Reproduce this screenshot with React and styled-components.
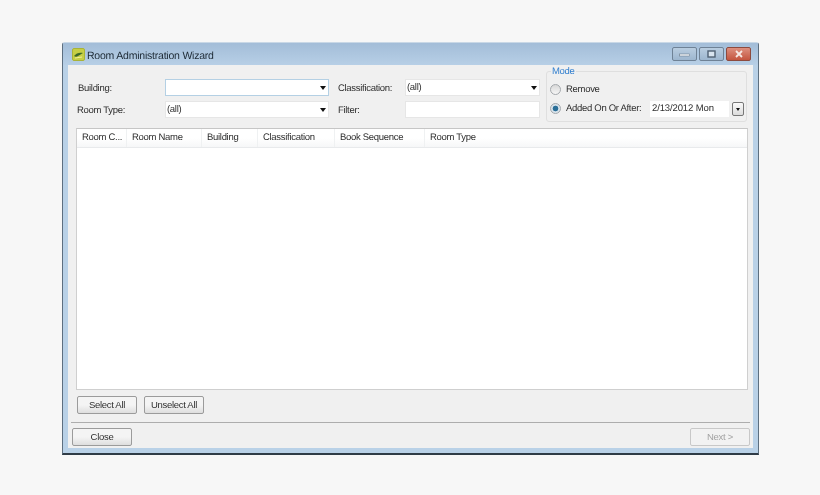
import React from 'react';
import styled, { createGlobalStyle } from 'styled-components';

const GlobalStyle = createGlobalStyle`
  html, body {
    margin: 0;
    background: #f7f7f7;
  }
  body {
    font-family: "Liberation Sans", Arial, sans-serif;
    font-size: 9.5px;
    letter-spacing: -0.3px;
    text-rendering: geometricPrecision;
    color: #2e2e2e;
    white-space: nowrap;
  }
`;

const Page = styled.div`
  width: 820px;
  height: 495px;
  padding: 42px 61px 40px 62px;
  box-sizing: border-box;
  filter: blur(0.4px);
`;

const Window = styled.div`
  height: 413px;
  box-sizing: border-box;
  display: flex;
  flex-direction: column;
  background: #b9d1e7;
  border: 1px solid #5d6f80;
  border-bottom: 2px solid #2f3b46;
  border-top-color: #c9d8e6;
  border-radius: 3px 3px 0 0;
`;

const TitleBar = styled.div`
  height: 22px;
  flex: none;
  display: flex;
  align-items: center;
  padding: 0 7px 0 9px;
  gap: 2px;
  background: linear-gradient(#a3bdd8, #b7cfe6);
`;

const Title = styled.div`
  flex: 1;
  font-size: 10.5px;
  letter-spacing: -0.22px;
  color: #1d2a35;
  padding-top: 3px;
`;

const WindowControls = styled.div`
  display: flex;
  gap: 2px;
  margin-top: -1px;
`;

const ControlButton = styled.div`
  width: 25px;
  height: 14px;
  box-sizing: border-box;
  display: flex;
  align-items: center;
  justify-content: center;
  border: 1px solid ${(p) => (p.$close ? '#8d4a3e' : '#6f8296')};
  border-radius: 2px;
  background: ${(p) =>
    p.$close ? 'linear-gradient(#dd8f7e, #c4553f)' : 'linear-gradient(#b9cde0, #9db6cf)'};
`;

const Client = styled.div`
  flex: 1;
  min-height: 0;
  margin: 0 5px 5px;
  background: #f0f0f0;
  display: flex;
  flex-direction: column;
`;

const Filters = styled.div`
  height: 63px;
  flex: none;
  display: flex;
  padding-left: 9px;
`;

const FilterGrid = styled.div`
  display: grid;
  grid-template-columns: 88px 164px 76px 135px;
  grid-auto-rows: 17px;
  row-gap: 5px;
  padding-top: 14px;
`;

const FieldLabel = styled.label`
  display: flex;
  align-items: center;
  padding-top: 1px;
  padding-left: ${(p) => (p.$side ? '9px' : p.$indent ? '1px' : '0')};
`;

const ComboBox = styled.div`
  position: relative;
  display: flex;
  align-items: center;
  box-sizing: border-box;
  padding: 0 0 1px 1px;
  background: #fff;
  border: 1px solid ${(p) => (p.$focus ? '#b4d0e4' : '#e6e6e6')};
`;

const ComboArrow = styled.span`
  position: absolute;
  right: 2px;
  top: 6px;
  border-left: 3px solid transparent;
  border-right: 3px solid transparent;
  border-top: 4px solid #111;
`;

const ModeGroup = styled.fieldset`
  width: 201px;
  height: 57px;
  box-sizing: border-box;
  margin: 0 0 0 6px;
  padding: 4px 0 0 3px;
  border: 1px solid #dfdfdf;
  border-radius: 3px;
  display: flex;
  flex-direction: column;
  gap: 2px;
`;

const ModeLegend = styled.legend`
  padding: 2px 1px 0;
  margin-left: 1px;
  color: #3480cf;
  line-height: 10px;
`;

const ModeRow = styled.div`
  display: flex;
  align-items: center;
  height: 17px;
`;

const Radio = styled.span`
  width: 9px;
  height: 9px;
  flex: none;
  margin-right: 5px;
  border-radius: 50%;
  border: 1px solid #a4a8ac;
  background: ${(p) =>
    p.$checked
      ? 'radial-gradient(circle, #2b6f98 0 2.5px, #d9e4ec 3.2px)'
      : 'linear-gradient(#d8d8d8, #f6f6f6)'};
`;

const ModeText = styled.span`
  width: 84px;
  flex: none;
`;

const DateBox = styled.div`
  width: 79px;
  height: 16px;
  padding-left: 2px;
  box-sizing: border-box;
  display: flex;
  align-items: center;
  background: #fff;
  letter-spacing: -0.12px;
`;

const DateButton = styled.div`
  width: 10px;
  height: 12px;
  margin-left: 3px;
  position: relative;
  border: 1px solid #777;
  border-radius: 2px;
  background: linear-gradient(#fafafa, #dcdcdc);
  &::after {
    content: '';
    position: absolute;
    left: 3px;
    top: 5px;
    border-left: 2px solid transparent;
    border-right: 2px solid transparent;
    border-top: 3px solid #111;
  }
`;

const Table = styled.div`
  flex: 1;
  min-height: 0;
  margin: 0 5px 0 8px;
  background: #fff;
  border: 1px solid #cfcfcf;
  border-top-color: #c6c6c6;
`;

const HeaderRow = styled.div`
  height: 18px;
  display: flex;
  background: linear-gradient(#fff 50%, #f6f7f8);
  border-bottom: 1px solid #e8eaec;
`;

const HeaderCell = styled.div`
  width: ${(p) => p.$w}px;
  box-sizing: border-box;
  padding: 0 0 2px 5px;
  display: flex;
  align-items: center;
  border-right: 1px solid ${(p) => (p.$last ? 'transparent' : '#eff1f2')};
`;

const ActionRow = styled.div`
  flex: none;
  display: flex;
  gap: 7px;
  padding: 6px 0 8px 9px;
`;

const Button = styled.button`
  width: 60px;
  height: 18px;
  padding: 0 0 1px;
  font: inherit;
  letter-spacing: inherit;
  color: ${(p) => (p.disabled ? '#a3a3a3' : '#2e2e2e')};
  border: 1px solid ${(p) => (p.disabled ? '#c8c8c8' : '#9b9b9b')};
  border-radius: 2px;
  background: ${(p) => (p.disabled ? '#f2f2f2' : 'linear-gradient(#f4f4f4 50%, #dedede)')};
`;

const Footer = styled.div`
  flex: none;
  margin: 0 3px 2px 3px;
  padding: 5px 0 0 1px;
  display: flex;
  justify-content: space-between;
  border-top: 1px solid #adadad;
`;

const columns = [
  { label: 'Room C...', w: 50 },
  { label: 'Room Name', w: 75 },
  { label: 'Building', w: 56 },
  { label: 'Classification', w: 77 },
  { label: 'Book Sequence', w: 90 },
  { label: 'Room Type', w: 120, last: true },
];

function AppIcon() {
  return (
    <svg width="13" height="13" viewBox="0 0 13 13">
      <rect x="0.5" y="0.5" width="12" height="12" rx="1.5" fill="#c6cf45" stroke="#a9b338" />
      <path d="M2 8 C4 5 8 4 11 5 C9 6 8 7 6 8 C5 9 3 9 2 8Z" fill="#3d6a28" />
      <path d="M3 10 L10 9" stroke="#f3ef9a" strokeWidth="1" />
    </svg>
  );
}

function App() {
  return (
    <Page>
      <GlobalStyle />
      <Window>
        <TitleBar>
          <AppIcon />
          <Title>Room Administration Wizard</Title>
          <WindowControls>
            <ControlButton>
              <svg width="11" height="6" viewBox="0 0 11 6"><rect x="0.5" y="3" width="10" height="2" fill="#f2f6fa" stroke="#5a6b7c" strokeWidth="0.5" /></svg>
            </ControlButton>
            <ControlButton>
              <svg width="9" height="8" viewBox="0 0 9 8"><rect x="1" y="1" width="7" height="6" fill="#d8e4ef" stroke="#4f6073" strokeWidth="1.4" /></svg>
            </ControlButton>
            <ControlButton $close>
              <svg width="10" height="8" viewBox="0 0 10 8"><path d="M2 1 L8 7 M8 1 L2 7" stroke="#f6e8e4" strokeWidth="1.8" /></svg>
            </ControlButton>
          </WindowControls>
        </TitleBar>
        <Client>
          <Filters>
            <FilterGrid>
              <FieldLabel $indent>Building:</FieldLabel>
              <ComboBox $focus><ComboArrow /></ComboBox>
              <FieldLabel $side>Classification:</FieldLabel>
              <ComboBox>(all)<ComboArrow /></ComboBox>
              <FieldLabel>Room Type:</FieldLabel>
              <ComboBox>(all)<ComboArrow /></ComboBox>
              <FieldLabel $side>Filter:</FieldLabel>
              <ComboBox />
            </FilterGrid>
            <ModeGroup>
              <ModeLegend>Mode</ModeLegend>
              <ModeRow><Radio /><ModeText>Remove</ModeText></ModeRow>
              <ModeRow>
                <Radio $checked />
                <ModeText>Added On Or After:</ModeText>
                <DateBox>2/13/2012 Mon</DateBox>
                <DateButton />
              </ModeRow>
            </ModeGroup>
          </Filters>
          <Table>
            <HeaderRow>
              {columns.map((c) => (
                <HeaderCell key={c.label} $w={c.w} $last={c.last}>{c.label}</HeaderCell>
              ))}
            </HeaderRow>
          </Table>
          <ActionRow>
            <Button>Select All</Button>
            <Button>Unselect All</Button>
          </ActionRow>
          <Footer>
            <Button>Close</Button>
            <Button disabled>Next &gt;</Button>
          </Footer>
        </Client>
      </Window>
    </Page>
  );
}

export default App;
